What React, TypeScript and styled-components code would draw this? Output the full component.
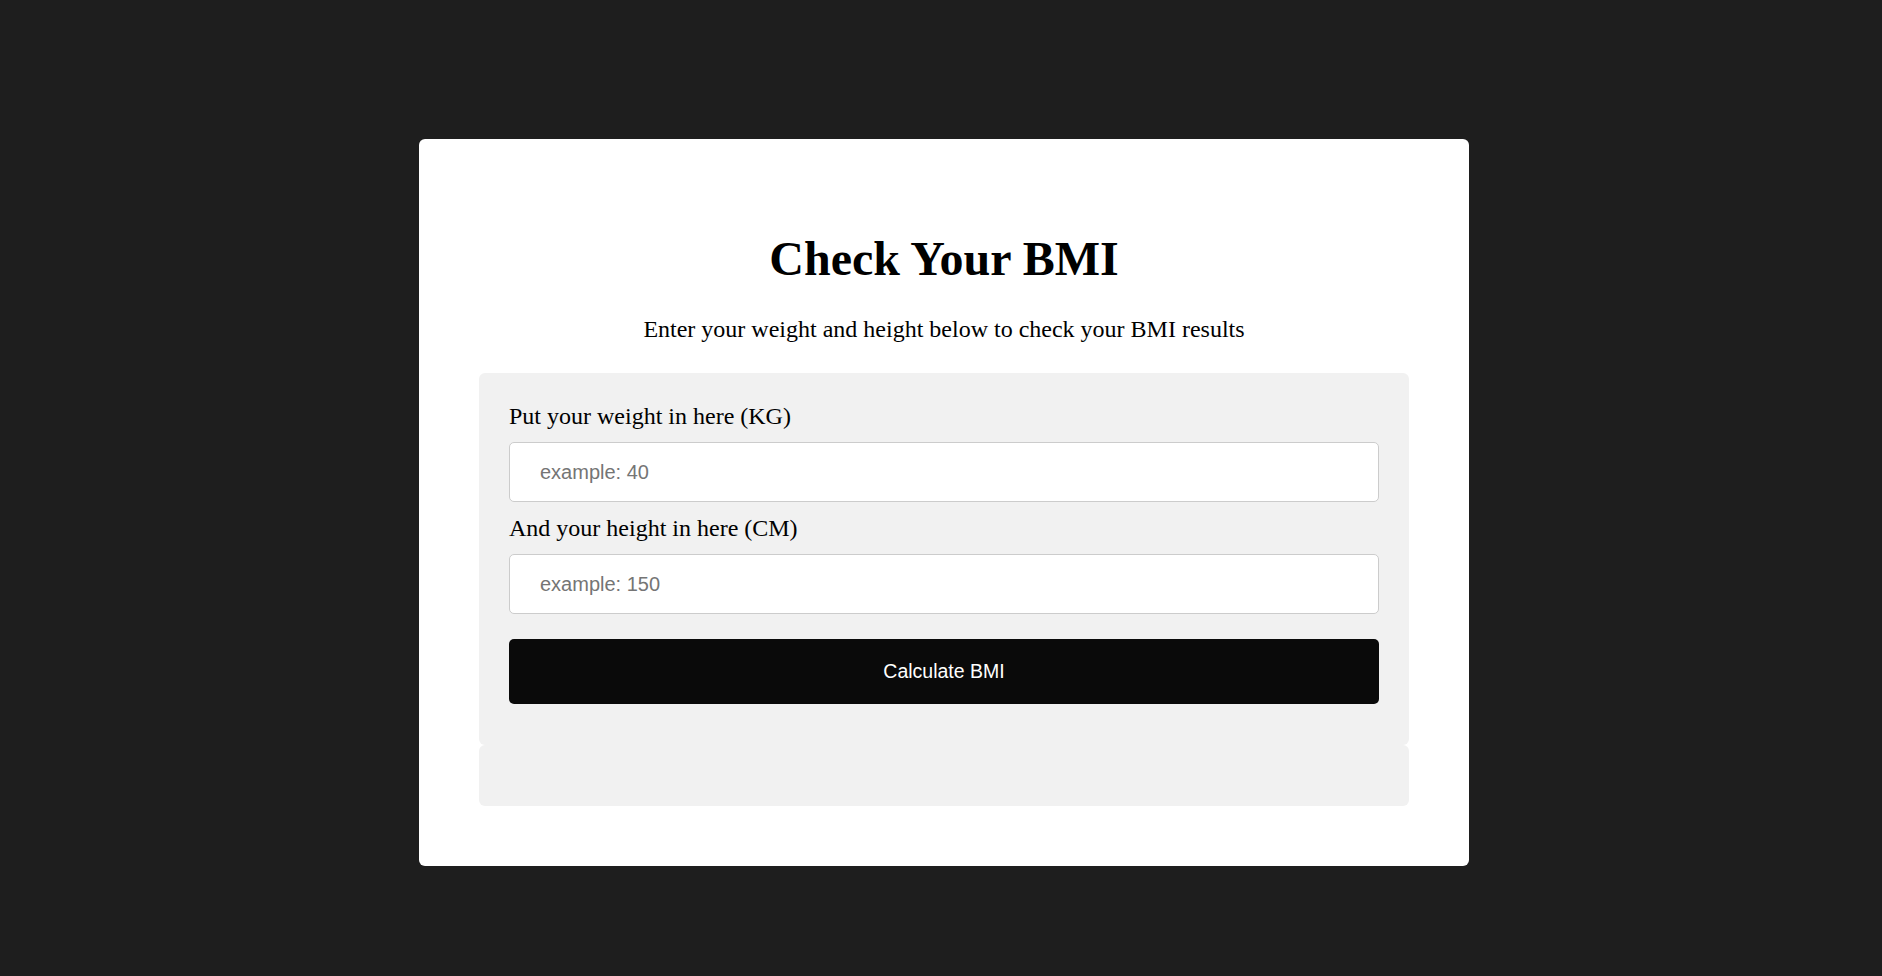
import React from "react";
import styled, { createGlobalStyle } from "styled-components";

const GlobalStyle = createGlobalStyle`
  html, body {
    margin: 0;
    padding: 0;
    background: #1e1e1e;
    font-family: "Liberation Serif", "Times New Roman", serif;
  }
  * { box-sizing: border-box; }
`;

const Page = styled.div`
  min-height: 976px;
  display: flex;
  justify-content: center;
  align-items: flex-start;
  padding: 139px 0 0 6px;
`;

const Card = styled.main`
  width: 1050px;
  background: #ffffff;
  border-radius: 6px;
  padding: 60px;
  text-align: center;
  color: #000;
`;

const Title = styled.h1`
  font-size: 48px;
  font-weight: 700;
  margin: 32px 0 30px;
  line-height: 1.15;
`;

const Subtitle = styled.p`
  font-size: 24px;
  margin: 0 0 29px;
  line-height: 1.15;
`;

const FormBox = styled.form`
  background: #f1f1f1;
  border-radius: 6px;
  padding: 30px 30px 41px;
  display: flex;
  flex-direction: column;
  text-align: left;
`;

const Label = styled.label`
  display: block;
  font-size: 24px;
  line-height: 1.15;
`;

const Input = styled.input`
  width: 100%;
  height: 60px;
  margin: 12px 0 12.5px;
  padding: 0 30px;
  border: 1px solid #cccccc;
  border-radius: 5px;
  background: #fff;
  font-family: "Liberation Sans", Arial, sans-serif;
  font-size: 20px;
  color: #000;
  outline: none;
  &::placeholder {
    color: #757575;
  }
`;

const Button = styled.button`
  margin-top: 12px;
  height: 65px;
  width: 100%;
  border: none;
  border-radius: 5px;
  background: #0a0a0a;
  color: #ffffff;
  font-family: "Liberation Sans", Arial, sans-serif;
  font-size: 19.5px;
  cursor: pointer;
`;

const ResultBox = styled.div`
  background: #f1f1f1;
  border-radius: 6px;
  height: 61px;
  padding: 30px;
`;

export default function App() {
  return (
    <>
      <GlobalStyle />
      <Page>
        <Card>
          <Title>Check Your BMI</Title>
          <Subtitle>Enter your weight and height below to check your BMI results</Subtitle>
          <FormBox onSubmit={(e) => e.preventDefault()}>
            <Label htmlFor="weight">Put your weight in here (KG)</Label>
            <Input id="weight" type="text" placeholder="example: 40" />
            <Label htmlFor="height">And your height in here (CM)</Label>
            <Input id="height" type="text" placeholder="example: 150" />
            <Button type="submit">Calculate BMI</Button>
          </FormBox>
          <ResultBox />
        </Card>
      </Page>
    </>
  );
}
